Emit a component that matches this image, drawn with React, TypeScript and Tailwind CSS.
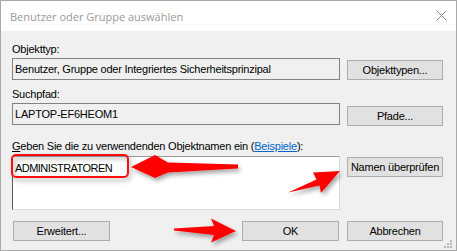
import React from 'react';

const Button: React.FC<{ label: string; className?: string }> = ({ label, className = '' }) => (
  <div
    className={`flex items-center justify-center border border-[#adadad] bg-[#e1e1e1] text-black ${className}`}
  >
    {label}
  </div>
);

const ReadonlyBox: React.FC<{ text: string }> = ({ text }) => (
  <div className="flex h-[22px] w-[328px] items-center border border-[#838383] bg-[#f0f0f0] pl-[2px] text-black">
    {text}
  </div>
);

// red annotation overlay (arrows + frame), drawn like a screenshot markup tool
const Annotations: React.FC = () => (
  <svg className="pointer-events-none absolute left-0 top-0" width={457} height={251} viewBox="0 0 457 251">
    <defs>
      <filter id="shade" x="-20%" y="-40%" width="140%" height="180%">
        <feDropShadow dx="2" dy="3" stdDeviation="2" floodColor="#000" floodOpacity="0.35" />
      </filter>
    </defs>
    <g filter="url(#shade)">
      <rect x={11} y={154} width={116} height={22} rx={4} fill="none" stroke="#ff1010" strokeWidth={2} />
      <polygon
        points="130,166 154,154 167,161.5 237,163.5 237,167.5 167,171.5 154,177"
        fill="#ff0000"
      />
      <polygon points="339,170 312,171.5 315.5,178.5 287,191.5 318.5,184.5 320,192" fill="#ff0000" />
      <polygon points="235,230 210,217.5 213,225 173,227.5 173,229.5 213,234 210,241.5" fill="#ff0000" />
    </g>
  </svg>
);

export default function App() {
  return (
    <div className="relative flex h-[251px] w-[457px] flex-col border border-[#a9a9a9] bg-[#f0f0f0] font-['Liberation_Sans',Arial,sans-serif] text-[11px] leading-[13px] tracking-[-0.22px]">
      {/* title bar */}
      <div className="flex h-[30px] shrink-0 items-center justify-between bg-white pl-[9px] pr-[9px]">
        <span className="font-['Open_Sans',sans-serif] text-[11px] tracking-normal text-[#9a9a9a]">
          Benutzer oder Gruppe auswählen
        </span>
        <svg width={11} height={11} viewBox="0 0 11 11" className="mb-[1px]">
          <path d="M0.5 0.5 L10.5 10.5 M10.5 0.5 L0.5 10.5" stroke="#8a8a8a" strokeWidth={1} />
        </svg>
      </div>

      <div className="flex flex-col pl-[11px] pr-[13px] pt-[12px]">
        <div className="h-[13px]">Objekttyp:</div>
        <div className="mt-[2px] flex items-start justify-between">
          <ReadonlyBox text="Benutzer, Gruppe oder Integriertes Sicherheitsprinzipal" />
          <Button label="Objekttypen..." className="mt-[2px] h-[20px] w-[96px]" />
        </div>

        <div className="mt-[8px] h-[13px]">Suchpfad:</div>
        <div className="mt-[2px] flex items-start justify-between">
          <ReadonlyBox text="LAPTOP-EF6HEOM1" />
          <Button label="Pfade..." className="mt-[3px] h-[20px] w-[96px]" />
        </div>

        <div className="mt-[14px] h-[13px]">
          <span className="underline">G</span>eben Sie die zu verwendenden Objektnamen ein (
          <span className="text-[#0066cc] underline">Beispiele</span>):
        </div>
        <div className="mt-[3px] flex items-start justify-between">
          <div className="h-[54px] w-[328px] border border-[#dadada] border-l-[#5a5a5a] border-t-[#9a9a9a] bg-white pl-[2px] pt-[5px] tracking-[-0.55px] text-black">
            ADMINISTRATOREN
          </div>
          <Button label="Namen überprüfen" className="mt-[1px] h-[20px] w-[96px]" />
        </div>

        <div className="mt-[11px] flex items-center justify-between">
          <Button label="Erweitert..." className="ml-[1px] h-[20px] w-[97px]" />
          <div className="flex gap-[8px]">
            <Button label="OK" className="h-[20px] w-[97px]" />
            <Button label="Abbrechen" className="h-[20px] w-[96px]" />
          </div>
        </div>
      </div>

      {/* size grip */}
      <svg className="absolute bottom-[1px] right-[3px]" width={9} height={9} viewBox="0 0 9 9">
        {[
          [6, 0],
          [3, 3],
          [6, 3],
          [0, 6],
          [3, 6],
          [6, 6],
        ].map(([x, y]) => (
          <rect key={`${x}-${y}`} x={x} y={y} width={2} height={2} fill="#b8b8b8" />
        ))}
      </svg>

      <Annotations />
    </div>
  );
}
